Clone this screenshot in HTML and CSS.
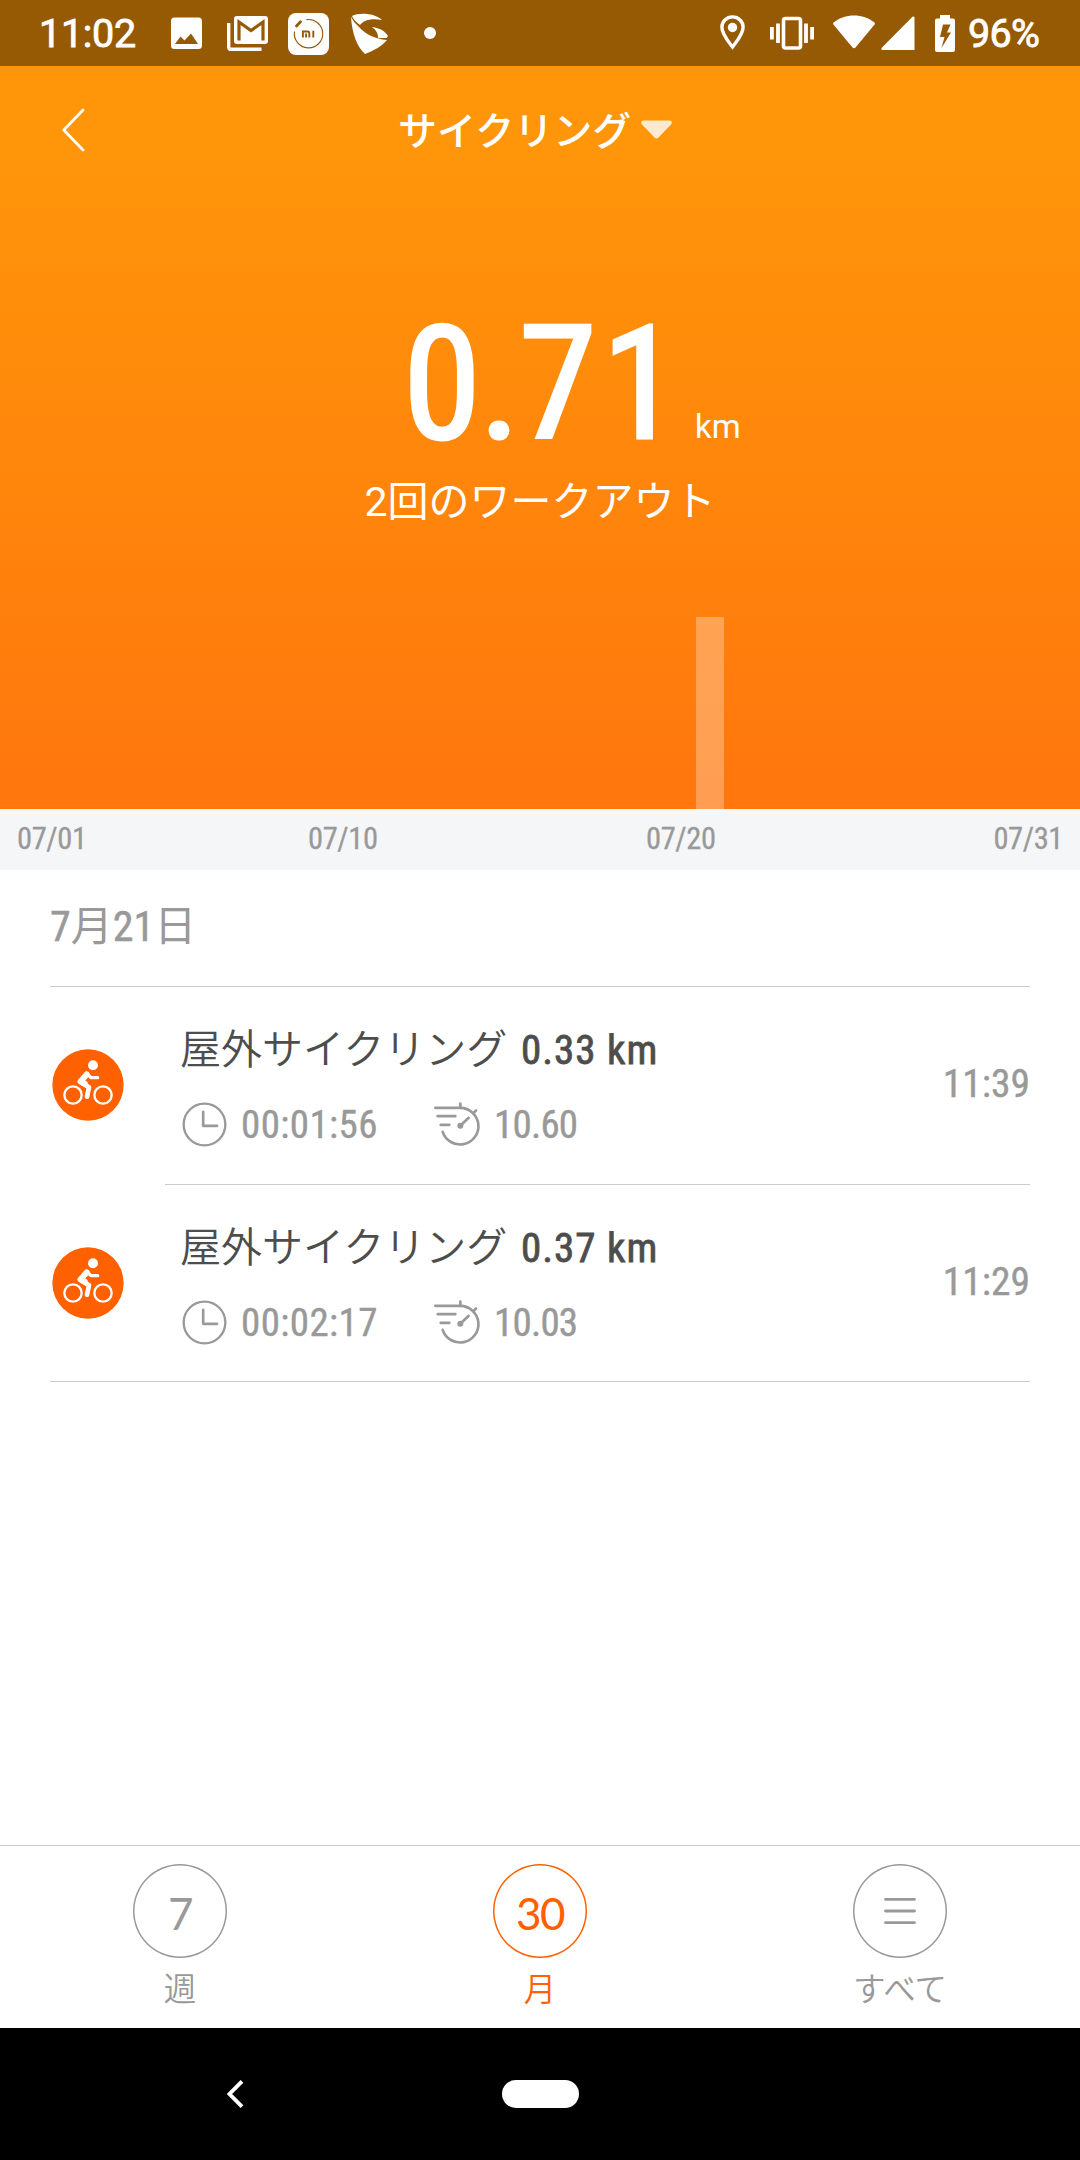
FILE: index.html
```
<!DOCTYPE html>
<html lang="ja">
<head>
<meta charset="utf-8">
<title>サイクリング</title>
<link rel="stylesheet" href="styles.css">
</head>
<body>
<svg width="0" height="0" class="defs">
  <symbol id="bike" viewBox="158 208 216 216">
    <circle cx="266" cy="316" r="107" fill="#ff6100"/>
    <g fill="none" stroke="#fff" stroke-linecap="round" stroke-linejoin="round">
      <circle cx="221" cy="346" r="26" stroke-width="7"/>
      <circle cx="311" cy="346" r="26" stroke-width="7"/>
      <path d="M262 285L242 306L269 323L263 351" stroke-width="14"/>
      <path d="M262 281L275 294H295" stroke-width="10"/>
      <path d="M262 284L244 305L256 312" stroke-width="18"/>
    </g>
    <circle cx="281" cy="257" r="15" fill="#fff"/>
  </symbol>
  <symbol id="clock" viewBox="547 367 136 136">
    <g fill="none" stroke="#999" stroke-linecap="round" stroke-linejoin="round">
      <circle cx="615" cy="435" r="63" stroke-width="7"/>
      <path d="M611 397V439H653" stroke-width="8"/>
    </g>
  </symbol>
  <symbol id="speed" viewBox="158 367 144 134">
    <g fill="none" stroke="#999" stroke-linecap="round" stroke-width="8">
      <path d="M165 384H240A55 55 0 1 1 187 456"/>
      <path d="M240 371V384M287 392L280 399M172 409H225M181 435H207M240 438L265 414"/>
    </g>
    <circle cx="240" cy="438" r="9" fill="#999"/>
  </symbol>
</svg>

<div class="status">
  <span class="status-time">11:02</span>
  <svg class="ic-image" width="31" height="32" viewBox="0 0 31 32"><path fill="#fff" fill-rule="evenodd" d="M3.500 0.500H27.500A3.500 3.500 0 0 1 31 4V28.500A3.500 3.500 0 0 1 27.500 32H3.500A3.500 3.500 0 0 1 0 28.500V4A3.500 3.500 0 0 1 3.500 0.500ZM4 27H27L20 16.500L13.500 23.500L9.500 19.500Z"/></svg>
  <svg class="ic-mail" width="42" height="36" viewBox="0 0 42 36"><path fill="none" stroke="#fff" stroke-width="3.400" d="M1.700 7V31A2.500 2.500 0 0 0 4.200 33.300H34.500"/><rect x="7" y="0" width="34" height="28" rx="3" fill="#fff"/><path fill="none" stroke="#965a04" stroke-width="3.200" d="M12 24.500V6L24 14.500L36 6V24.500"/></svg>
  <svg class="ic-mi" width="41" height="42" viewBox="0 0 41 42"><rect width="41" height="42" rx="8" fill="#fff"/><g fill="none" stroke="#965a04"><path stroke-width="1.100" d="M18.500 6.600A14.200 14.200 0 1 1 6.500 18.500"/><path stroke-width="2.800" stroke-linecap="round" d="M8.500 13L12.500 8.700"/><path stroke-width="1.900" d="M14.900 24.500V18.500H19.500Q21.300 18.500 21.300 20.300V24.500M18.100 20.500V24.500M25.300 17.700V24.500"/></g></svg>
  <svg class="ic-bird" width="38" height="42" viewBox="0 0 38 42"><path fill="#fff" d="M1 3C8 -1 24 0 31 7C20 5 13 7 9 12C5 9 2 6 1 3ZM0 4C2 8 5 11 8 14C14 21 24 26 36 27C30 34 22 38 14 41C6 34 1 20 0 4ZM21 14C29 15 34 18 37 23L35.500 25L27 25C27 20 25 17 21 14Z"/></svg>
  <span class="dot"></span>
  <span class="spacer"></span>
  <svg class="ic-pin" width="25" height="35" viewBox="0 0 25 35"><path fill="none" stroke="#fff" stroke-width="3.400" d="M12.500 1.900C6.500 1.900 1.900 6.500 1.900 12.200C1.900 19 8 26 12.500 32C17 26 23.100 19 23.100 12.200C23.100 6.500 18.500 1.900 12.500 1.900Z"/><circle cx="12.500" cy="12.500" r="4.700" fill="#fff"/></svg>
  <svg class="ic-vib" width="44" height="34" viewBox="0 0 44 34"><rect x="13.500" y="2.500" width="17" height="29.500" rx="2" fill="none" stroke="#fff" stroke-width="3.600"/><path stroke="#fff" stroke-width="3.800" d="M1.900 11V23.500M8 7.500V27M36 7.500V27M42.100 11V23.500"/></svg>
  <svg class="ic-wifi" width="42" height="34" viewBox="0 0 42 34"><path fill="#fff" d="M0.500 7.500C12 -2 30 -2 41.500 7.500L42 9L22.500 32.500Q21 34 19.500 32.500L0 9Z"/></svg>
  <svg class="ic-sig" width="34" height="34" viewBox="0 0 34 34"><path fill="#fff" d="M31.500 0.800Q33.500 0 33.500 2V34H1.500Q-0.500 33.500 1 31.500Z"/></svg>
  <svg class="ic-bat" width="20" height="37" viewBox="0 0 20 37"><path fill="#fff" fill-rule="evenodd" d="M5 0H15V3.500H18Q20 3.500 20 5.500V35Q20 37 18 37H2Q0 37 0 35V5.500Q0 3.500 2 3.500H5ZM8 9.500L5 22H9.500L6.500 33L16 17.500H12L15.500 9.500Z"/></svg>
  <span class="status-pct">96%</span>
</div>

<header class="hero">
  <div class="titlebar">
    <svg class="back" width="24" height="46" viewBox="0 0 24 46"><path fill="none" stroke="#fff" stroke-width="2.700" stroke-linecap="round" stroke-linejoin="round" d="M21 3L1.800 23L21 43"/></svg>
    <div class="title">サイクリング</div>
    <svg class="caret" width="31" height="19" viewBox="0 0 31 19"><path fill="#fff" fill-opacity=".8" d="M2 0.500H29Q32 1.500 30 4.500L17.500 17.500Q15.500 19.500 13.500 17.500L1 4.500Q-1 1.500 2 0.500Z"/></svg>
  </div>
  <div class="total"><span class="total-num">0.<span class="wide">71</span></span><span class="unit">km</span></div>
  <div class="count">2回のワークアウト</div>
  <div class="chart"><div class="bar"></div></div>
</header>

<div class="axis"><span>07/01</span><span>07/10</span><span>07/20</span><span>07/31</span></div>

<main class="list">
  <h2 class="day"><span class="num">7</span>月<span class="num">21</span>日</h2>
  <section class="item">
    <svg class="badge" width="72" height="72"><use href="#bike"/></svg>
    <div class="body">
      <div class="info">
        <div class="name"><span class="jp">屋外サイクリング</span><b>0.33 km</b></div>
        <div class="meta">
          <svg width="45" height="45"><use href="#clock"/></svg><span class="dur">00:01:56</span>
          <svg width="48" height="45"><use href="#speed"/></svg><span class="spd">10.60</span>
        </div>
      </div>
      <time class="time">11:39</time>
    </div>
  </section>
  <section class="item last">
    <svg class="badge" width="72" height="72"><use href="#bike"/></svg>
    <div class="body">
      <div class="info">
        <div class="name"><span class="jp">屋外サイクリング</span><b>0.37 km</b></div>
        <div class="meta">
          <svg width="45" height="45"><use href="#clock"/></svg><span class="dur">00:02:17</span>
          <svg width="48" height="45"><use href="#speed"/></svg><span class="spd">10.03</span>
        </div>
      </div>
      <time class="time">11:29</time>
    </div>
  </section>
</main>

<nav class="tabs">
  <div class="tab"><span class="ring">7</span><span class="label">週</span></div>
  <div class="tab active"><span class="ring">30</span><span class="label">月</span></div>
  <div class="tab"><span class="ring menu"><svg width="32" height="28" viewBox="0 0 32 28"><path fill="none" stroke="#999" stroke-width="2.800" stroke-linecap="round" d="M1.500 2.300H30.500M1.500 14H30.500M1.500 25.700H30.500"/></svg></span><span class="label">すべて</span></div>
</nav>

<footer class="sysnav">
  <svg class="sys-back" width="17" height="28" viewBox="0 0 17 28"><path fill="none" stroke="#fff" stroke-width="3.800" d="M15 1.300L2.500 14L15 26.700"/></svg>
  <span class="pill"></span>
</footer>
</body>
</html>
```
FILE: styles.css
```
* { box-sizing: border-box; }
body {
  margin: 0;
  width: 1080px;
  height: 2160px;
  display: flex;
  flex-direction: column;
  background: #fff;
  color: #999;
  font-family: "Roboto Condensed", "Noto Sans CJK JP", sans-serif;
  overflow: hidden;
}
svg { display: block; flex: none; }
.defs { position: absolute; }

.status {
  height: 66px;
  flex: none;
  display: flex;
  align-items: flex-start;
  padding: 0 38px 0 39px;
  background: #965a04;
  color: #fff;
  font: 400 39.5px/68px Roboto, sans-serif;
  -webkit-text-stroke: .8px currentColor;
}
.status-time { width: 132px; letter-spacing: -.3px; }
.ic-image { margin-top: 17px; }
.ic-mail { margin: 16px 0 0 25px; }
.ic-mi { margin: 13px 0 0 19px; }
.ic-bird { margin: 13px 0 0 22px; }
.dot { width: 12px; height: 12px; margin: 27px 0 0 35px; border-radius: 50%; background: #fff; }
.spacer { flex: 1; }
.ic-pin { margin-top: 15px; }
.ic-vib { margin: 16px 0 0 25px; }
.ic-wifi { margin: 15px 0 0 19px; }
.ic-sig { margin: 16px 0 0 6px; }
.ic-bat { margin: 15px 0 0 20px; }
.status-pct { width: 74px; margin-left: 13px; letter-spacing: -0.7px; white-space: nowrap; }

.hero {
  height: 743px;
  flex: none;
  display: flex;
  flex-direction: column;
  background: linear-gradient(#ff960a 10%, #ff760d);
  color: #fff;
}
.titlebar {
  height: 132px;
  display: flex;
  align-items: center;
  padding-left: 62px;
}
.back { margin-top: -4px; }
.title { margin-left: 312px; font-size: 39px; line-height: 60px; font-weight: 500; }
.caret { margin: -5px 0 0 10px; }
.total {
  display: flex;
  align-items: baseline;
  padding-left: 403px;
  margin-top: 106px;
}
.total-num {
  width: 292px;
  font-size: 158px;
  line-height: 160px;
  font-weight: 400;
  letter-spacing: -2px;
  white-space: nowrap;
  -webkit-text-stroke: 3px currentColor;
}
.wide { letter-spacing: 5px; }
.unit { font-family: Roboto, sans-serif; font-size: 33px; line-height: 40px; }
.count {
  margin-top: 8px;
  font-family: Roboto, "Noto Sans CJK JP", sans-serif;
  font-size: 41px;
  font-weight: 400;
  line-height: 60px;
  text-align: center;
}
.chart { height: 192px; margin-top: auto; padding-left: 696px; display: flex; align-items: flex-end; }
.bar { width: 28px; height: 100%; background: rgba(255, 255, 255, .29); }

.axis {
  height: 61px;
  flex: none;
  display: grid;
  grid-template-columns: 291px 338px 1fr auto;
  align-items: center;
  padding: 0 17px 2px 17px;
  background: #f5f6f8;
  font-size: 30.5px;
  letter-spacing: -.4px;
  -webkit-text-stroke: .3px currentColor;
}

.list { flex: 1; padding-left: 50px; }
.day {
  width: 980px;
  height: 117px;
  margin: 0;
  padding-bottom: 3px;
  border-bottom: 1px solid #ccc;
  font-size: 42px;
  font-weight: 400;
  line-height: 113px;
}
.num { -webkit-text-stroke: .5px currentColor; }
.item { width: 980px; height: 198px; display: flex; }
.badge { margin: 62px 0 0 2px; }
.body {
  flex: 1;
  display: flex;
  justify-content: space-between;
  margin-left: 41px;
  padding-left: 15px;
  border-bottom: 1px solid #ccc;
}
.last { height: 197px; border-bottom: 1px solid #ccc; }
.last .body { border-bottom: 0; }
.info { padding-top: 38px; }
.name { display: flex; align-items: baseline; font-size: 42px; line-height: 50px; color: #4d4d4d; }
.jp { width: 341px; font-weight: 350; font-size: 41px; }
.name b { font-size: 41px; font-weight: 400; letter-spacing: 1px; -webkit-text-stroke: .8px currentColor; }
.meta { display: flex; align-items: center; margin: 27px 0 0 2px; font-size: 39px; line-height: 44px; -webkit-text-stroke: .4px currentColor; }
.dur { width: 192px; margin-left: 14px; letter-spacing: .4px; }
.spd { margin-left: 13px; letter-spacing: -.8px; }
.time { margin-top: 75px; font-size: 39.5px; line-height: 44px; letter-spacing: 0; -webkit-text-stroke: .4px currentColor; }

.tabs {
  height: 183px;
  flex: none;
  display: grid;
  grid-template-columns: repeat(3, 1fr);
  border-top: 1px solid #ccc;
}
.tab { display: flex; flex-direction: column; align-items: center; padding-top: 18px; }
.ring {
  width: 94px;
  height: 94px;
  display: flex;
  align-items: center;
  justify-content: center;
  padding-top: 3px;
  box-shadow: inset 0 0 0 1.5px currentColor;
  border-radius: 50%;
  font: 400 44px/50px Lato, sans-serif;
  letter-spacing: -1.500px;
}
.menu { padding-top: 0; }
.label { margin-top: 12px; font-size: 32.500px; line-height: 40px; font-weight: 350; }
.active { color: #ff6100; }

.sysnav { height: 132px; flex: none; display: flex; align-items: flex-start; padding: 52px 0 0 227px; background: #000; }
.pill { width: 77px; height: 28px; margin-left: 258px; border-radius: 14px; background: #fff; }
```
